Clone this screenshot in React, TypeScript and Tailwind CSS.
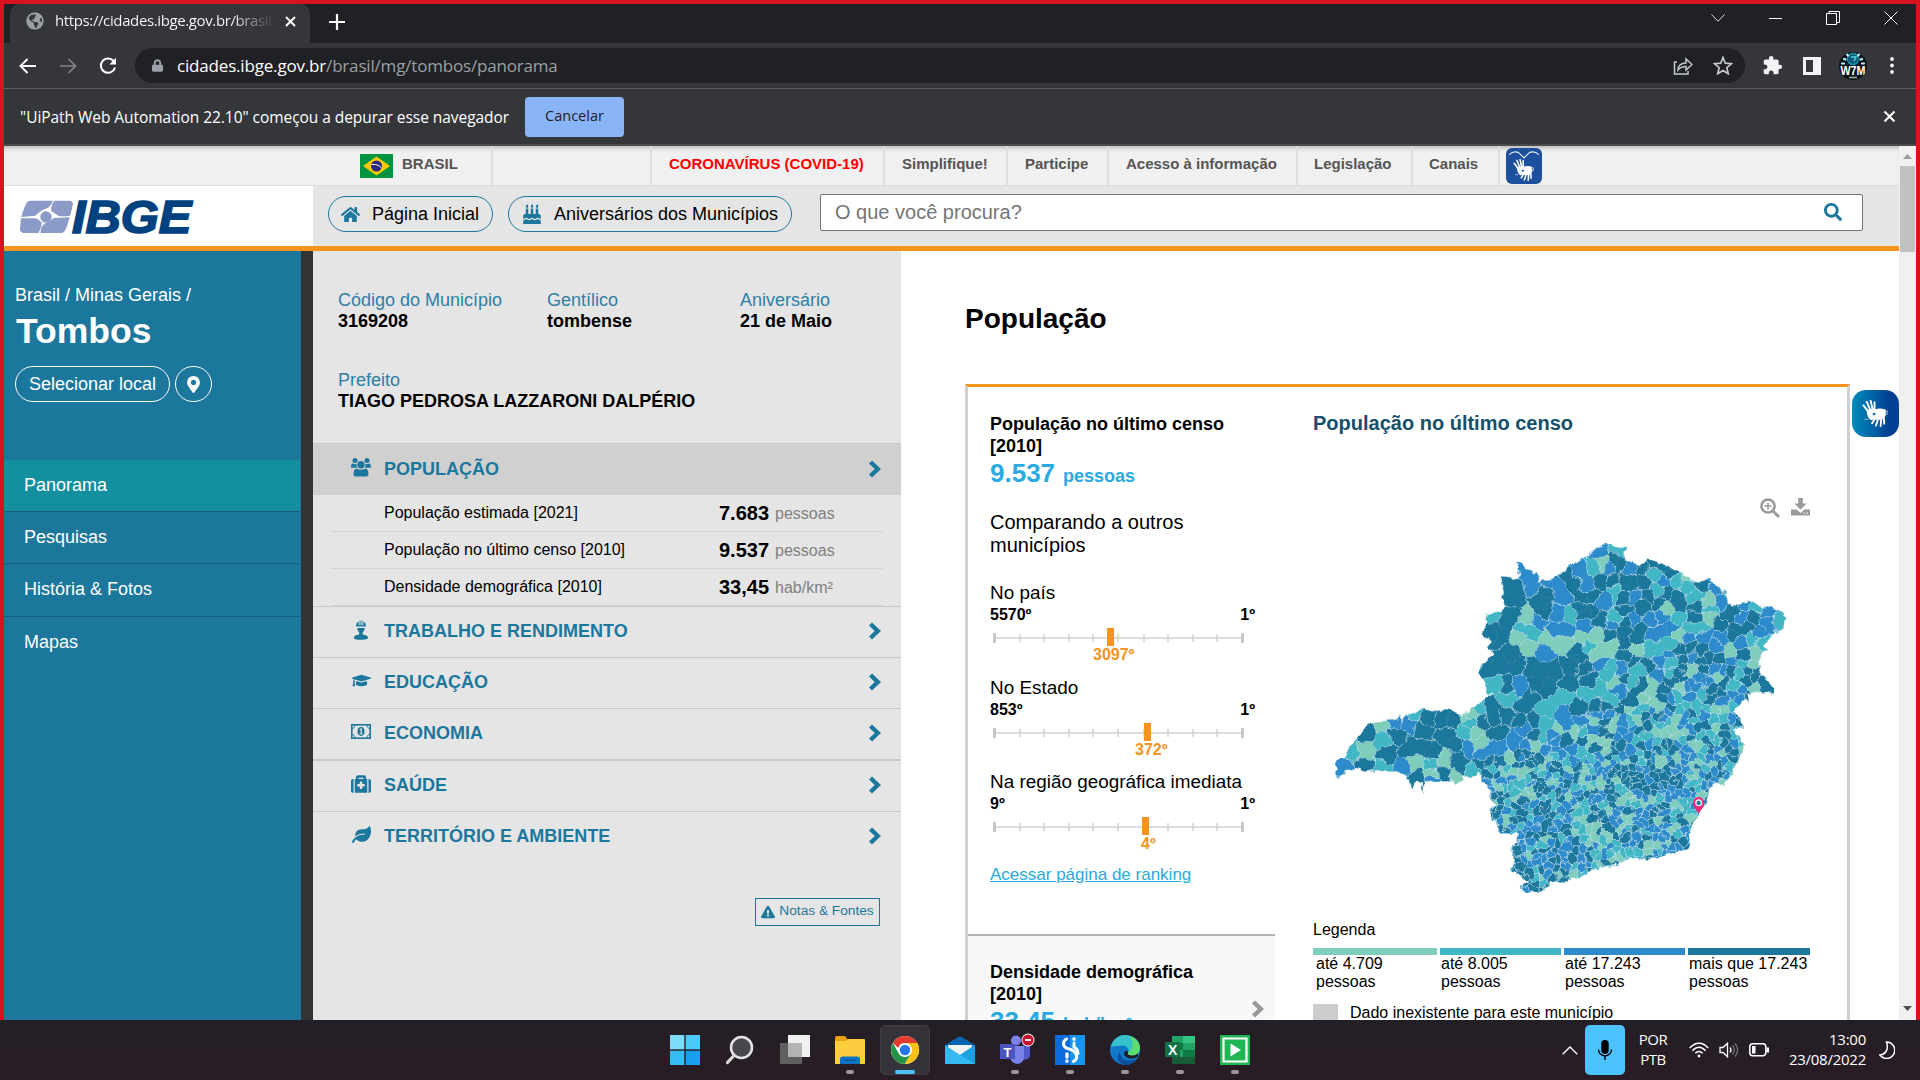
import React from "react";
import { FaHome, FaBirthdayCake, FaSearch, FaMapMarkerAlt, FaGraduationCap, FaExclamationTriangle, FaLeaf, FaMedkit, FaGlobeAmericas, FaLock } from "react-icons/fa";
import { MdExtension } from "react-icons/md";

/* ---------- Choropleth map ---------- */

const OUTLINE =
  "110,832 108,792 122,764 133,768 150,735 168,718 180,690 200,668 230,664 232,656 256,660 270,658 290,655 293,643 303,657 330,642 350,632 365,622 395,630 430,628 450,626 488,640 505,630 525,612 545,603 578,580 562,575 558,535 534,520 540,500 580,462 568,435 572,425 545,400 550,378 566,364 556,355 560,342 605,332 618,320 606,285 612,265 606,225 648,230 662,228 652,190 660,186 675,200 700,215 715,206 720,222 708,248 730,240 755,232 770,215 800,202 850,175 875,148 925,128 983,138 972,178 1018,192 1045,178 1090,184 1130,215 1150,225 1185,240 1228,233 1278,278 1284,308 1320,310 1345,298 1390,316 1420,322 1440,335 1460,352 1445,380 1410,412 1392,432 1412,444 1385,450 1375,505 1400,535 1420,562 1415,578 1385,570 1340,580 1350,598 1320,600 1302,630 1320,645 1330,682 1300,685 1322,705 1332,730 1328,760 1305,790 1300,820 1278,848 1235,850 1222,880 1225,905 1195,940 1178,970 1165,1010 1168,1035 1120,1055 1068,1078 1030,1070 985,1078 900,1102 850,1122 790,1145 752,1140 750,1160 715,1178 675,1175 665,1150 690,1145 665,1130 633,1105 640,1085 638,1040 655,1020 655,1000 600,998 580,960 570,930 585,905 565,880 565,855 535,818 520,830 490,825 485,838 470,842 450,835 395,842 370,845 368,878 360,850 350,845 335,862 320,835 318,818 270,815 230,815 160,800";

const FILL: Record<string, string> = { a: "#7fcdbb", b: "#41b6c4", c: "#2e8bcb", d: "#1c779d" };

/* Each entry: colour class followed by the x y points that belong to one municipality. */
const LARGE = `c 130 795
b 152 752
a 192 752
d 200 695
a 242 664
b 250 715
d 190 795
d 262 760
b 248 800
c 285 665
d 290 700
c 322 668
c 305 800
b 342 636
a 345 785
d 360 735 400 755 330 745
d 370 690
d 385 650
d 425 655 465 655
d 440 705 470 725
b 398 790
a 435 775
d 350 830
c 397 836
d 432 820
a 465 825
a 396 818
d 470 770 480 800
b 522 812
a 492 650
b 508 665
a 515 638
b 538 622
b 492 698
a 528 690
c 510 745
a 535 728
d 545 665
d 645 260 640 300
c 685 225 700 250
c 740 250
c 790 280 770 250
d 725 300 740 270 740 330
b 580 348
a 678 350
d 620 360 600 400 640 340 580 390
a 662 405
b 700 398 670 385
a 685 432
c 715 368
c 770 340
b 810 345
c 795 385 765 385
a 765 425 800 430 745 415
c 735 452
d 600 490 640 460 660 490 570 510
d 720 510 690 500 760 510 740 560 710 550
d 825 450 815 490 805 550 840 470
d 855 500
d 870 535
b 582 548
c 657 553
d 625 555
b 628 598
d 690 590 665 620
b 775 600 740 625 800 585
d 570 620 580 650
d 620 640
d 660 655
d 700 660
c 680 678
c 790 640 795 670
b 740 670 732 710
d 590 695
a 780 685
c 580 745 550 760 600 745
c 645 725
c 680 735
d 800 715
c 845 665
d 850 720
d 835 615
d 890 620
b 860 575 900 560
a 885 658
d 905 695
d 800 225 820 250 850 290 880 290
c 850 215 830 205 858 250
c 900 152
b 945 138 970 148
d 945 175 960 190
b 882 200
a 908 188
c 930 205
d 940 240
d 905 240
c 990 200
d 1000 245 975 240 1030 245
b 1060 215
d 1085 195 1060 185 1115 210
d 840 320 880 330 855 335
c 920 295 895 310
d 965 295
c 1005 285
d 970 328
d 1030 320
b 1070 268
d 1080 305
a 1097 320
c 1085 350
c 1085 390 1050 400 1110 380
d 975 390 970 430 975 365
c 1000 355
d 1025 385 1010 410
d 900 360
c 855 378
c 940 370
b 945 350
a 850 410 890 402
d 930 405
b 865 440
a 910 450 940 432 880 460
c 905 487
b 925 520 930 500
d 975 465
a 1010 445
b 1050 445 1080 450 1110 430
b 1010 510 1000 540 1025 505
a 940 542
d 975 530
c 955 570
b 935 595
d 1015 570 990 600 1030 545
a 1050 570 1050 550
a 1030 590
d 1040 495
c 1075 518
d 1095 565
b 1112 518
d 1150 505
b 1130 245
b 1160 250
d 1205 245
c 1250 262
c 1262 300
b 1187 288
d 1140 305 1130 290
d 1190 320
d 1185 350
b 1140 355
b 1165 385 1200 380
a 1230 300
b 1230 325
a 1228 348
a 1135 405
c 1170 410
c 1215 405
d 1265 370
d 1300 330 1285 350
d 1310 385 1340 380 1300 400
d 1365 350
c 1335 312
b 1365 320
c 1405 330
b 1440 360
c 1405 365
c 1380 395
c 1325 430
b 1355 415
d 1330 465
b 1325 490
a 1365 490
a 1370 460
b 1390 425
a 1292 445
c 1295 480
d 1205 450
d 1210 505
d 1255 475
d 1275 545
d 1340 540
d 1390 545
c 1320 598
c 1225 540
c 1170 590
b 1205 580
d 1195 680 1225 675
d 1315 665
c 1305 730
d 1268 725
d 1300 775
d 1262 820
c 1255 772
a 1275 625
b 1275 655
a 1065 690
c 970 690
a 945 650
d 1020 695
d 570 820 540 790
d 650 765
a 610 812
a 690 810 665 820
b 650 845 670 850 610 860
b 640 875
a 675 880
d 715 880
d 645 915
d 605 900
d 590 940
c 700 905
a 740 775
a 725 795
d 760 805
c 785 765
d 780 890
c 800 915
d 720 840
d 925 975 935 985
d 1025 1030
a 870 985
a 885 1010
c 930 1035
c 975 1040
d 865 1065
b 850 1015
b 880 1060
d 1045 865
d 1010 860
d 1120 1012
d 1150 962
d 685 760`;

type Seed = { x: number; y: number; id: number; c: string };
type Vertex = { x: number; y: number; nb: number };

function random(seed: number) {
  let s = seed;
  return () => {
    s = (s * 1664525 + 1013904223) % 4294967296;
    return s / 4294967296;
  };
}

function buildSeeds(): Seed[] {
  const seeds: Seed[] = [];
  LARGE.split("\n").forEach((line, id) => {
    const [c, ...rest] = line.trim().split(" ");
    for (let i = 0; i < rest.length; i += 2) seeds.push({ x: +rest[i], y: +rest[i + 1], id, c });
  });
  const rnd = random(77);
  let id = 1000;
  for (let i = 0; i < 30000; i++) {
    const x = 540 + rnd() * 830;
    const y = 200 + rnd() * 980;
    let r = 1000;
    if (y > 770 && x > 560) r = 15.5;
    else if (y > 620 && x > 880) r = 18;
    else if (y > 690 && x > 700) r = 22;
    else if (y > 430 && x > 1050) r = 22;
    else if (x > 880) r = 26;
    if (seeds.some((s) => Math.hypot(s.x - x, s.y - y) < r * (s.id < 1000 ? 1.2 : 1))) continue;
    const k = rnd();
    const dark = (x < 820 && y > 850) || y < 600 || (y > 770 && y < 880 && x < 1050);
    const c = dark ? (k < 0.1 ? "a" : k < 0.26 ? "b" : k < 0.6 ? "c" : "d") : k < 0.22 ? "a" : k < 0.44 ? "b" : k < 0.72 ? "c" : "d";
    /* A second point beside the first one makes the municipality longer than it is wide. */
    seeds.push({ x, y, id, c });
    if (rnd() < 0.45) {
      const turn = rnd() * Math.PI * 2;
      seeds.push({ x: x + Math.cos(turn) * r * 0.6, y: y + Math.sin(turn) * r * 0.6, id, c });
    }
    id++;
  }
  return seeds;
}

function buildCells() {
  const seeds = buildSeeds();
  const cells: { d: string; c: string }[] = [];
  let borders = "";
  seeds.forEach((s, i) => {
    let poly: Vertex[] = [
      { x: 60, y: 80, nb: -1 },
      { x: 1500, y: 80, nb: -1 },
      { x: 1500, y: 1230, nb: -1 },
      { x: 60, y: 1230, nb: -1 },
    ];
    const near = seeds
      .map((o, j) => ({ j, dist: Math.hypot(o.x - s.x, o.y - s.y) }))
      .filter((o) => o.j !== i)
      .sort((p, q) => p.dist - q.dist);
    for (const n of near) {
      const reach = Math.max(...poly.map((v) => Math.hypot(v.x - s.x, v.y - s.y)));
      if (n.dist > 2 * reach) break;
      const o = seeds[n.j];
      const mx = (s.x + o.x) / 2;
      const my = (s.y + o.y) / 2;
      const side = (v: Vertex) => (v.x - mx) * (o.x - s.x) + (v.y - my) * (o.y - s.y);
      const out: Vertex[] = [];
      poly.forEach((a, k) => {
        const b = poly[(k + 1) % poly.length];
        const sa = side(a);
        const sb = side(b);
        const t = sa / (sa - sb);
        const cut = { x: a.x + (b.x - a.x) * t, y: a.y + (b.y - a.y) * t };
        if (sa <= 0) {
          out.push(a);
          if (sb > 0) out.push({ ...cut, nb: n.j });
        } else if (sb <= 0) out.push({ ...cut, nb: a.nb });
      });
      poly = out;
    }
    cells.push({ c: s.c, d: "M" + poly.map((v) => v.x.toFixed(1) + " " + v.y.toFixed(1)).join("L") + "Z" });
    poly.forEach((v, k) => {
      const w = poly[(k + 1) % poly.length];
      if (v.nb > i && seeds[v.nb].id !== s.id) borders += `M${v.x.toFixed(1)} ${v.y.toFixed(1)}L${w.x.toFixed(1)} ${w.y.toFixed(1)}`;
    });
  });
  return { cells, borders };
}

const MAP = buildCells();

function StateMap() {
  return (
    <svg width="520" height="420" viewBox="0 0 1560 1260" className="block">
      <defs>
        <clipPath id="state">
          <polygon points={OUTLINE} />
        </clipPath>
        <filter id="rough" x="0" y="0" width="100%" height="100%" filterUnits="userSpaceOnUse" colorInterpolationFilters="sRGB">
          <feTurbulence type="fractalNoise" baseFrequency="0.035" numOctaves="3" seed="4" />
          <feDisplacementMap in="SourceGraphic" scale="26" xChannelSelector="R" yChannelSelector="G" />
        </filter>
      </defs>
      <g filter="url(#rough)">
        <g clipPath="url(#state)">
          {MAP.cells.map((c, i) => (
            <path key={i} d={c.d} fill={FILL[c.c]} stroke={FILL[c.c]} strokeWidth="1.5" />
          ))}
          <path d={MAP.borders} fill="none" stroke="#b9dbe6" strokeWidth="2.1" strokeLinecap="round" />
          <polygon points={OUTLINE} fill="none" stroke="#b5dbe6" strokeWidth="3" />
        </g>
      </g>
      <path d="M1196 938C1188 925 1179 915 1179 905a17 17 0 0 1 34 0c0 10-9 20-17 33z" fill="#ee2a7b" />
      <circle cx="1196" cy="905" r="10.5" fill="#dff1f4" />
      <circle cx="1196" cy="906" r="6.5" fill="#1c779d" />
    </svg>
  );
}

/* ---------- Small drawings ---------- */

const Chevron = ({ className = "text-[#1c779d]" }: { className?: string }) => (
  <svg width="14" height="18" viewBox="0 0 14 18" className={className}>
    <path d="M2.5 2 9.8 9l-7.3 7" fill="none" stroke="currentColor" strokeWidth="4.4" />
  </svg>
);

const Hands = ({ size }: { size: number }) => (
  <svg width={size} height={size} viewBox="0 0 28 28" fill="none" stroke="currentColor" strokeLinecap="round" strokeLinejoin="round">
    <path d="M1.500 5.500 6.500 12M5 2l3.500 8.500M9 .9l2 9M13 2.300V10" strokeWidth="2" />
    <path d="M5.500 11 12 9.500l1.300 2.500-3.300 2 3 4.500-3 2c-2.500-1-4.500-5-4.500-9.500z" fill="currentColor" strokeWidth="1.200" />
    <path d="M11.500 12.500c3-3.500 7-3.800 12.500-2v5.500l-3.500 4-7.500-.5-1.500-1.500 4-4z" fill="currentColor" strokeWidth="1.200" />
    <path d="M14 18.500 10.500 24M17 19l-2.500 7.500M20 19l-.7 8M22.500 17l.5 7.500" strokeWidth="2" />
    <path d="M26 11v4M3 20h3" strokeWidth="1.200" opacity=".6" />
  </svg>
);

const PeopleIcon = () => (
  <svg width="20" height="19" viewBox="0 0 20 19" fill="currentColor">
    <circle cx="4" cy="2.6" r="2.5" />
    <circle cx="16" cy="2.6" r="2.5" />
    <circle cx="10" cy="6.8" r="3.7" />
    <path d="M0 9.2C0 7 .8 5.6 1.8 5.6c2 1 3.200.6 3.900.2-.4 2 0 3 .6 4H1.200C.6 9.800 0 9.700 0 9.200z" />
    <path d="M20 9.200C20 7 19.200 5.600 18.200 5.600c-2 1-3.200.6-3.900.2.4 2 0 3-.6 4h5.100c.6 0 1.200-.1 1.200-.6z" />
    <path d="M5.400 10.500c3 1.800 6.200 1.800 9.200 0 2 .4 2.900 3 2.900 5.500 0 1.800-1 2.500-2.500 2.500H5c-1.500 0-2.500-.7-2.500-2.500 0-2.500.9-5.100 2.900-5.500z" />
  </svg>
);

const WorkerIcon = () => (
  <svg width="16" height="20" viewBox="0 0 16 20" fill="currentColor">
    <path d="M3 6.500C3 4 4 2.300 5.600 1.600v3.600h1V.5h.9v4.700h1V.5h.9v4.700h1V1.600C12 2.300 13 4 13 6.500z" />
    <path d="M4.300 8h7.400c0 2-.8 3.300-2 4.200v2.300c3.600.4 5.400 1.500 5.400 3.500 0 1-3 1.800-7.200 1.800S.8 19 .8 18c0-2 1.800-3.100 5.400-3.500v-2.300c-1.100-.9-1.900-2.200-1.900-4.200z" />
  </svg>
);

const MoneyIcon = () => (
  <svg width="20" height="15" viewBox="0 0 20 15" fill="none" stroke="currentColor">
    <rect x=".8" y=".8" width="18.400" height="13.400" strokeWidth="1.600" />
    <path d="M.8 4.500C3 4.500 4 3 4 .8M19.200 4.500C17 4.500 16 3 16 .8M.8 10.500C3 10.500 4 12 4 14.200M19.200 10.500c-2.200 0-3.200 1.500-3.200 3.700" strokeWidth="1" />
    <ellipse cx="10" cy="7.500" rx="3.500" ry="4.400" fill="currentColor" stroke="none" />
    <path d="M8.800 5.800 10.200 5v5M8.600 10h3" stroke="#e5e5e5" strokeWidth="1.200" />
  </svg>
);

const Flag = () => (
  <svg width="33" height="24" viewBox="0 0 33 24" className="mr-[9px]">
    <rect width="33" height="24" fill="#009440" />
    <path d="M16.500 2.500 30 12 16.500 21.500 3 12z" fill="#ffcb00" />
    <circle cx="16.500" cy="12" r="5.500" fill="#302681" />
    <path d="M11.500 10.500c4-.6 7.500.6 9.900 3.300" stroke="#fff" fill="none" strokeWidth="1" />
  </svg>
);

const IbgeLogo = () => (
  <svg width="178" height="36" viewBox="0 0 534 108" className="overflow-visible">
    <g fill="#8c9ac8">
      <path d="M32 2H99C93 16 88 22 73 28 60 34 52 42 46 47L4 51C8 36 14 20 18 12 21 5 25 2 32 2z" />
      <path d="M105 2h42c9 0 13 6 11 14-2 10-4 20-8 31-16 2-30 2-36 0-7-5-14-10-20-13-2-14 3-26 11-32z" />
      <path d="M3 55h43c8 2 14 8 19 12 1 10-4 22-10 32H13C3 99-1 92 0 84z" />
      <path d="M62 99c0-16 4-24 16-30 8-4 16-8 24-15l47-2c-4 14-8 26-12 36-4 8-8 11-14 11z" />
      <circle cx="78" cy="51" r="17" />
    </g>
    <text x="156" y="99" textLength="358" lengthAdjust="spacingAndGlyphs" fontFamily="Liberation Sans, sans-serif" fontWeight="700" fontStyle="italic" fontSize="136" fill="#00417f" stroke="#00417f" strokeWidth="5">IBGE</text>
  </svg>
);

/* ---------- Browser chrome ---------- */

function TabStrip() {
  return (
    <div className="flex h-[39px] items-end justify-between bg-[#202124]">
      <div className="flex h-full items-center">
        <div className="ml-[6px] flex h-[39px] w-[300px] items-center rounded-t-[9px] bg-[#35363a] pl-4 pb-[5px]">
          <FaGlobeAmericas size={18} className="shrink-0 rounded-full text-[#9aa0a6]" />
          <span className="ml-[11px] w-[220px] overflow-hidden whitespace-nowrap bg-gradient-to-r from-white from-80% to-[#35363a] bg-clip-text pb-px text-[15px] tracking-[-0.38px] text-transparent">https://cidades.ibge.gov.br/brasil/</span>
          <svg width="11" height="11" viewBox="0 0 11 11" className="ml-[10px]"><path d="M1 1l9 9M10 1l-9 9" stroke="#fff" strokeWidth="1.900" /></svg>
        </div>
        <svg width="16" height="16" viewBox="0 0 16 16" className="mb-[4px] ml-[19px]"><path d="M8 0v16M0 8h16" stroke="#fff" strokeWidth="2.200" /></svg>
      </div>
      <div className="mb-[18px] flex items-center pr-[18px]">
        <svg width="14" height="8" viewBox="0 0 14 8"><path d="M.5.5 7 7.300 13.500.5" fill="none" stroke="#ddd" /></svg>
        <svg width="13" height="14" viewBox="0 0 13 14" className="ml-[44px]"><path d="M0 7.500h13" stroke="#fff" /></svg>
        <svg width="14" height="14" viewBox="0 0 14 14" className="ml-[44px]"><path d="M.5 2.500h10v11H.5zM3 2.500v-2h10.500v11h-3" fill="none" stroke="#fff" /></svg>
        <svg width="14" height="14" viewBox="0 0 14 14" className="ml-[44px]"><path d="M.5.5l13 13M13.500.5l-13 13" stroke="#fff" /></svg>
      </div>
    </div>
  );
}

function Toolbar() {
  return (
    <div className="flex h-[46px] items-center border-b border-[#5f6064] bg-[#35363a] pl-[15px]">
      <svg width="17" height="16" viewBox="0 0 17 16"><path d="M17 8H1.500M8.500 1l-7 7 7 7" fill="none" stroke="#fff" strokeWidth="1.900" /></svg>
      <svg width="17" height="16" viewBox="0 0 17 16" className="ml-[24px]"><path d="M0 8h15.500M8.500 1l7 7-7 7" fill="none" stroke="#85868a" strokeWidth="1.700" /></svg>
      <svg width="18" height="18" viewBox="0 0 18 18" className="ml-[22px]"><path d="M14.600 4A7.200 7.200 0 1 0 16 10.500" fill="none" stroke="#fff" strokeWidth="2" /><path d="M17 .8V7.500h-6.700z" fill="#fff" /></svg>
      <div className="ml-[18px] flex h-[35px] w-[1610px] items-center rounded-full bg-[#202124] pl-[17px] pr-[12px]">
        <FaLock size={13} className="w-[11px] text-[#9aa0a6]" />
        <span className="ml-[14px] whitespace-nowrap text-[17px] tracking-[-0.18px] text-white">cidades.ibge.gov.br<span className="text-[#9aa0a6]">/brasil/mg/tombos/panorama</span></span>
        <svg width="20" height="18" viewBox="0 0 20 18" className="ml-auto"><path d="M4 5H1.500v12H15v-3M5 13c.3-4.500 3-7 8-7V2l6 5.500-6 5.500V9.500c-3.500 0-6 1-8 3.500z" fill="none" stroke="#c4c7cb" strokeWidth="1.500" /></svg>
        <svg width="20" height="19" viewBox="0 0 20 19" className="ml-[20px]"><path d="M10 1.500l2.300 5.700 6.200.5-4.700 4 1.500 6.100-5.300-3.300-5.300 3.300 1.500-6.100-4.700-4 6.200-.5z" fill="none" stroke="#c4c7cb" strokeWidth="1.700" /></svg>
      </div>
      <MdExtension size={21} className="ml-[17px] text-[#f1f3f4]" />
      <svg width="18" height="18" viewBox="0 0 18 18" className="ml-[20px]"><path d="M0 0h18v18H0zM3 3v12h7V3z" fill="#f1f3f4" fillRule="evenodd" /></svg>
      <div className="ml-[18px] h-7 w-7 overflow-hidden rounded-full bg-[#0a1418]">
        <svg width="28" height="28" viewBox="0 0 28 28">
          <circle cx="14" cy="7" r="6.500" fill="#1b87a6" />
          <path d="M9 5l4-3 6 2 1 5-6 3-5-3z" fill="#0c5d7a" />
          <path d="M12 5h5l-2 4" stroke="#5cc8e4" strokeWidth="1.500" fill="none" />
          <path d="M8 2.500l1 1M20 2.500l-1 1M5 7l1.500.5M23 7l-1.500.5M3 11.500h2M25 11.500h-2" stroke="#bff0fa" strokeWidth="2.200" fill="none" strokeLinecap="round" />
          <text x="1.500" y="22.500" textLength="25" lengthAdjust="spacingAndGlyphs" fontFamily="Liberation Sans, sans-serif" fontWeight="700" fontSize="12" fill="#fff">W7M</text>
          <path d="M10 25.500h8" stroke="#aaa" strokeWidth="1.500" />
        </svg>
      </div>
      <svg width="4" height="17" viewBox="0 0 4 17" className="ml-[23px]" fill="#f1f3f4"><circle cx="2" cy="2" r="1.900" /><circle cx="2" cy="8.500" r="1.900" /><circle cx="2" cy="15" r="1.900" /></svg>
    </div>
  );
}

function InfoBar() {
  return (
    <div className="flex h-[57px] items-center justify-between border-b-2 border-[#4a4b50] bg-[#35363a] pl-4 pr-[20px]">
      <div className="flex items-center">
        <span className="w-[489px] whitespace-nowrap pt-0.5 text-[15.5px] tracking-[-0.05px] text-white">"UiPath Web Automation 22.10" começou a depurar esse navegador</span>
        <button className="ml-4 h-10 w-[99px] rounded bg-[#8ab4f8] pb-px text-[14.5px] tracking-[0.03px] text-[#202124]">Cancelar</button>
      </div>
      <svg width="13" height="13" viewBox="0 0 13 13"><path d="M1.500 1.500l10 10M11.500 1.500l-10 10" stroke="#fff" strokeWidth="2.100" /></svg>
    </div>
  );
}

/* ---------- Page ---------- */

function GovItem({ width, children, className = "text-[#555]" }: { width: string; children?: React.ReactNode; className?: string }) {
  return <div className={`flex h-full shrink-0 items-center border-r-2 border-[#dedede] pb-[2px] pl-[17px] ${width} ${className}`}>{children}</div>;
}

function GovBar() {
  return (
    <div className="flex h-10 items-center border-b border-[#dcdcdc] bg-[#f0f0f0] text-[15px] font-bold whitespace-nowrap shadow-[inset_0_5px_4px_-3px_#b8b8b8]">
      <div className="flex h-full w-[489px] items-center border-r-2 border-[#dedede] pl-[356px] text-[#555]"><Flag /><span className="pb-[2px]">BRASIL</span></div>
      <GovItem width="w-[159px]" />
      <GovItem width="w-[233px]" className="text-[#f00]">CORONAVÍRUS (COVID-19)</GovItem>
      <GovItem width="w-[123px]">Simplifique!</GovItem>
      <GovItem width="w-[101px]">Participe</GovItem>
      <GovItem width="w-[189px]">Acesso à informação</GovItem>
      <GovItem width="w-[115px]"><span className="-ml-px">Legislação</span></GovItem>
      <GovItem width="w-[87px]"><span className="-ml-px">Canais</span></GovItem>
      <div className="relative ml-[6px] flex h-9 w-9 items-end justify-center rounded-md bg-[#1c4f9c] pb-[3px] text-white">
        <svg width="32" height="9" viewBox="0 0 32 9" className="absolute left-0.5 top-0.5"><path d="M1 5c3-4 9-4 11-1l4 4 4-4c2-3 8-3 11 1" fill="none" stroke="#e4edf8" strokeWidth="1.100" /></svg>
        <Hands size={22} />
      </div>
    </div>
  );
}

function SiteHeader() {
  return (
    <header className="flex h-[65px] border-b-[5px] border-[#f7931e] bg-[#e5e5e5]">
      <div className="w-[309px] bg-white pl-[16px] pt-[14px]"><IbgeLogo /></div>
      <div className="flex flex-1 pl-[15px] pt-2">
        <button className="mt-0.5 flex h-9 w-[165px] items-center rounded-full border border-[#1c779d] pl-[12px] text-[18px] whitespace-nowrap"><FaHome size={19} className="mr-3 text-[#1c779d]" />Página Inicial</button>
        <button className="ml-[15px] mt-0.5 flex h-9 w-[284px] items-center rounded-full border border-[#1c779d] pl-[13px] text-[18px] whitespace-nowrap"><FaBirthdayCake size={20} className="mr-[12px] w-5 shrink-0 text-[#1c779d]" />Aniversários dos Municípios</button>
        <div className="ml-[28px] flex h-[37px] w-[1043px] items-center justify-between rounded-[2px] border border-[#767676] bg-white pb-px pl-[14px] pr-[20px] text-[20px] text-[#757575]">O que você procura?<FaSearch size={18} className="text-[#1c779d]" /></div>
      </div>
    </header>
  );
}

function Sidebar() {
  return (
    <nav className="flex h-full w-[309px] shrink-0 flex-col border-r-[12px] border-[#333] bg-[#1c779d] text-[18px] text-white">
      <div className="h-[209px] pl-[11px] pt-[33px]">
        <div className="leading-[22px]">Brasil / Minas Gerais /</div>
        <div className="mt-[4px] pl-px text-[35.500px] font-bold leading-[42px]">Tombos</div>
        <div className="mt-[14px] flex gap-[5px]">
          <button className="h-[36px] w-[155px] rounded-full border border-white whitespace-nowrap">Selecionar local</button>
          <button className="flex h-[36px] w-[37px] items-center justify-center rounded-full border border-white"><FaMapMarkerAlt size={17} /></button>
        </div>
      </div>
      <div className="mr-px h-[52px] border-b border-[#155f7e] bg-[#148f9f] pl-5 leading-[50px]">Panorama</div>
      <div className="mr-px h-[52px] border-b border-[#155f7e] pl-5 leading-[50px]">Pesquisas</div>
      <div className="mr-px h-[53px] border-b border-[#155f7e] pl-5 leading-[50px]">História &amp; Fotos</div>
      <div className="pl-5 leading-[50px]">Mapas</div>
    </nav>
  );
}

function Fact({ label, value, className = "" }: { label: string; value: string; className?: string }) {
  return (
    <div className={`whitespace-nowrap text-[18px] leading-[21px] ${className}`}>
      <div className="text-[#2f7fa5]">{label}</div>
      <div className="font-bold">{value}</div>
    </div>
  );
}

function Section({ icon, title, className }: { icon: React.ReactNode; title: string; className: string }) {
  return (
    <div className={`flex items-center pl-[38px] pr-[19px] pb-px text-[18px] font-bold text-[#1c779d] ${className}`}>
      <span className="mb-1 flex w-[20px] justify-center">{icon}</span>
      <span className="ml-[13px] flex-1 whitespace-nowrap">{title}</span>
      <Chevron className="mb-px text-[#1c779d]" />
    </div>
  );
}

function Row({ label, value, unit }: { label: string; value: string; unit: string }) {
  return (
    <div className="ml-[18px] mr-[18px] flex h-[37px] items-center border-b border-[#d4d4d4] pb-px pl-[53px] text-[16px]">
      <span className="w-[335px]">{label}</span>
      <span className="text-[20px] font-bold">{value}</span>
      <span className="ml-[6px] mt-[3px] text-[#808080]">{unit}</span>
    </div>
  );
}

function InfoPanel() {
  return (
    <section className="flex h-full w-[588px] shrink-0 flex-col bg-[#e5e5e5]">
      <div className="h-[192px] pl-[25px] pt-[39px]">
        <div className="flex">
          <Fact label="Código do Município" value="3169208" className="w-[209px]" />
          <Fact label="Gentílico" value="tombense" className="w-[193px]" />
          <Fact label="Aniversário" value="21 de Maio" />
        </div>
        <Fact label="Prefeito" value="TIAGO PEDROSA LAZZARONI DALPÉRIO" className="mt-[38px]" />
      </div>
      <Section icon={<PeopleIcon />} title="POPULAÇÃO" className="h-[52px] border-t border-[#c8c8c8] bg-[#d0d0d0]" />
      <Row label="População estimada [2021]" value="7.683" unit="pessoas" />
      <Row label="População no último censo [2010]" value="9.537" unit="pessoas" />
      <Row label="Densidade demográfica [2010]" value="33,45" unit="hab/km²" />
      <Section icon={<WorkerIcon />} title="TRABALHO E RENDIMENTO" className="h-[51px] border-t border-[#c8c8c8]" />
      <Section icon={<FaGraduationCap size={19} />} title="EDUCAÇÃO" className="h-[51px] border-t border-[#c8c8c8]" />
      <Section icon={<MoneyIcon />} title="ECONOMIA" className="h-[51px] border-t border-[#c8c8c8]" />
      <Section icon={<FaMedkit size={20} />} title="SAÚDE" className="h-[52px] border-t-2 border-[#c8c8c8]" />
      <Section icon={<FaLeaf size={19} />} title="TERRITÓRIO E AMBIENTE" className="h-[51px] border-t border-[#c8c8c8]" />
      <button className="ml-[442px] mt-[36px] flex h-[28px] w-[125px] items-center justify-center gap-[4px] border border-[#1c779d] pb-0.5 text-[13.700px] whitespace-nowrap text-[#1c779d]"><FaExclamationTriangle size={14} className="mt-px" />Notas &amp; Fontes</button>
    </section>
  );
}

const TICKS = [27, 51, 76, 100, 125, 151, 175, 200, 224];

function Ranking({ title, last, rank, marker, label }: { title: string; last: string; rank: string; marker: number; label: number }) {
  return (
    <div className="h-[94.500px]">
      <div className="whitespace-nowrap text-[18.900px] leading-[23px]">{title}</div>
      <div className="flex w-[265px] justify-between text-[16px] font-bold leading-[22px]"><span>{last}</span><span>1º</span></div>
      <svg width="260" height="18" viewBox="0 0 260 18" className="mt-[2px] block">
        <path d="M3 10h251" stroke="#dcdcdc" strokeWidth="2" />
        {TICKS.map((t) => <path key={t} d={`M${t + 3} 6v8`} stroke="#ccc" strokeWidth="1.300" />)}
        <path d="M4.500 5v10M252.500 5v10" stroke="#c8c8c8" strokeWidth="3" />
        <rect x={marker} y="0" width="7" height="18" fill="#f7931e" />
      </svg>
      <div className="text-[16px] font-bold leading-[18px] text-[#f7931e]" style={{ paddingLeft: label }}>{rank}</div>
    </div>
  );
}

function Legend() {
  const items = [
    ["bg-[#7fcdbb] w-[124px]", "até 4.709"],
    ["bg-[#41b6c4] w-[121px]", "até 8.005"],
    ["bg-[#2e8bcb] w-[121px]", "até 17.243"],
    ["bg-[#1c779d] w-[122px]", "mais que 17.243"],
  ];
  return (
    <div className="text-[16px]">
      <div className="leading-[20px]">Legenda</div>
      <div className="mt-[8px] flex gap-[3px]">
        {items.map(([c, t], i) => (
          <div key={t}>
            <div className={`h-[7px] ${c}`} />
            <div className={`whitespace-nowrap leading-[18px] ${i === 0 ? "pl-[3px]" : "pl-px"}`}>{t}<br />pessoas</div>
          </div>
        ))}
      </div>
      <div className="mt-[13px] flex gap-[12px]"><div className="h-[25px] w-[25px] bg-[#ccc]" /><span className="leading-[18px]">Dado inexistente para este município</span></div>
    </div>
  );
}

function Main() {
  return (
    <main className="relative h-full flex-1 overflow-hidden bg-white pl-[64px] pt-[51px]">
      <h1 className="text-[28px] font-bold leading-[34px]">População</h1>
      <div className="mt-[48px] flex h-[760px] w-[885px] border-x-[3px] border-t-[3px] border-x-[#cfcfcf] border-t-[#f7931e]">
        <div className="w-[307px]">
          <div className="h-[547px] pl-[22px] pt-[26px]">
            <div className="text-[18px] font-bold leading-[22px] whitespace-nowrap">População no último censo<br />[2010]</div>
            <div className="flex items-baseline gap-2 font-bold leading-[32px] text-[#29abe2]"><span className="text-[26px]">9.537</span><span className="text-[18px]">pessoas</span></div>
            <div className="mt-[19px] text-[20px] leading-[23px]">Comparando a outros<br />municípios</div>
            <div className="mt-[24px]">
              <Ranking title="No país" last="5570º" rank="3097º" marker={117} label={103} />
              <Ranking title="No Estado" last="853º" rank="372º" marker={154} label={145} />
              <Ranking title="Na região geográfica imediata" last="9º" rank="4º" marker={152} label={151} />
            </div>
            <a className="block text-[17px] leading-[20px] text-[#29abe2] underline whitespace-nowrap">Acessar página de ranking</a>
          </div>
          <div className="flex h-[120px] justify-between border-t-2 border-[#b3b3b3] bg-[#f8f8f8] pl-[22px] pr-[10px] pt-[25px]">
            <div>
              <div className="text-[18px] font-bold leading-[22px] whitespace-nowrap">Densidade demográfica<br />[2010]</div>
              <div className="flex items-baseline gap-2 font-bold leading-[32px] text-[#29abe2]"><span className="text-[26px]">33,45</span><span className="text-[18px]">hab/km²</span></div>
            </div>
            <div className="mt-[39px]"><Chevron className="text-[#999]" /></div>
          </div>
        </div>
        <div className="flex-1 pl-[38px] pt-[24px]">
          <h2 className="text-[20px] font-bold leading-[24px] text-[#144f6b]">População no último censo</h2>
          <div className="mt-[63px] flex gap-[11px] pl-[447px] text-[#999]">
            <svg width="20" height="20" viewBox="0 0 20 20" fill="none" stroke="currentColor"><circle cx="8" cy="8" r="6.600" strokeWidth="2.500" /><path d="M13 13l6 6" strokeWidth="3" /><path d="M8 4.500v7M4.500 8h7" strokeWidth="1.500" /></svg>
            <svg width="19" height="18" viewBox="0 0 19 18" fill="currentColor"><path d="M7.200 0h4.600v5.500h3.700L9.500 11.700 3.500 5.500h3.700zM0 11.500h5.500L9.500 15l4-3.500H19V17.500H0zM12.500 14.500v1.300h1.300v-1.300zM15.500 14.500v1.300h1.300v-1.300z" fillRule="evenodd" /></svg>
          </div>
          <div className="-ml-[13px] -mt-[17px]"><StateMap /></div>
          <div className="-mt-px"><Legend /></div>
        </div>
      </div>
      <div className="absolute right-0 top-[139px] flex h-[47px] w-[47px] items-center justify-center rounded-[14px] bg-gradient-to-r from-[#038bb9] to-[#003f93] to-80% text-white"><Hands size={27} /></div>
    </main>
  );
}

/* ---------- Taskbar ---------- */

const ICONS: { icon: React.ReactNode; dot?: boolean; active?: boolean }[] = [
  { icon: <g><path d="M0 0h14.300v14.300H0z" fill="#7fdcff" /><path d="M15.700 0H30v14.300H15.700z" fill="#4cc9fb" /><path d="M0 15.700h14.300V30H0z" fill="#39bbf8" /><path d="M15.700 15.700H30V30H15.700z" fill="#189fee" /></g> },
  { icon: <g><path d="M9 20.500 2.500 27.500" stroke="#dcdcdc" strokeWidth="3.200" strokeLinecap="round" /><circle cx="16.500" cy="12.500" r="10.500" fill="#4a474c" stroke="#e6e6e6" strokeWidth="2.500" /></g> },
  { icon: <g><path d="M8 0h22v22H8z" fill="#f0f0f0" /><path d="M0 8h22v21H0z" fill="#6c6c6c" opacity=".85" /><path d="M8 8h14v14H8z" fill="#b4b4b4" /></g> },
  { icon: <g><path d="M0 3c0-1 .6-2 2-2h8l3 4v5H0z" fill="#e8a20c" /><path d="M0 6h11l2-2h16c.6 0 1 .5 1 1v23c0 .6-.4 1-1 1H0z" fill="#fbcd3f" /><path d="M5 29v-5c0-1.600 1-2.500 2.500-2.500h15c1.500 0 2.500 1 2.500 2.500v5z" fill="#0f72c4" /><path d="M9 25h12" stroke="#074e8c" /></g>, dot: true },
  { icon: <g><circle cx="15" cy="15" r="14" fill="#fff" /><path d="M15 1a14 14 0 0 1 12.200 7H15a7 7 0 0 0-6.700 5L2.900 8A14 14 0 0 1 15 1z" fill="#e33b2e" /><path d="M27.200 8A14 14 0 0 1 14.500 29l6.300-10.200A7 7 0 0 0 15 8z" fill="#fbc116" /><path d="M2.900 8A14 14 0 0 0 14.500 29l6.200-10c-3 4-9 4-11.700 0z" fill="#229342" /><circle cx="15" cy="15" r="6.500" fill="#fff" /><circle cx="15" cy="15" r="5.200" fill="#2a75e8" /></g>, active: true },
  { icon: <g><path d="M0 10 15 1l15 9v19H0z" fill="#0763ae" /><path d="M3 10h24v10H3z" fill="#f2f2f2" /><path d="M0 10l15 10L30 10v19H0z" fill="#35b9f1" /><path d="M15 20 30 10v19z" fill="#1c9fe4" /></g> },
  { icon: <g><circle cx="16" cy="5.500" r="5" fill="#7b83eb" /><circle cx="26" cy="8" r="3.500" fill="#5059c9" /><path d="M20 11h10v9c0 5-6 6-9 3z" fill="#5059c9" /><path d="M10 11h14v11c0 9-13 9-14 0z" fill="#7b83eb" /><path d="M0 9h15v15H0z" fill="#4b53bc" /><text x="3.500" y="21.500" fontFamily="Liberation Sans, sans-serif" fontWeight="700" fontSize="13" fill="#fff">T</text><circle cx="28" cy="5" r="6.500" fill="#fff" /><circle cx="28" cy="5" r="5.600" fill="#c4162e" /><path d="M25 5h6" stroke="#fff" strokeWidth="1.800" /></g>, dot: true },
  { icon: <g><path d="M0 0h30v30H0z" fill="#0a6bdc" /><path d="M15 0h15v30H15z" fill="#1596ec" /><path d="M11.500 4C6.500 7 8 12.500 14 14c8 2 10 9 4.500 12.500M19 8v4c2.500 1.500 4 4 4 6.500" fill="none" stroke="#fff" strokeWidth="3" strokeLinecap="round" /><path d="M19 4v.2M12 19v3M12 26v.2" fill="none" stroke="#fff" strokeWidth="3.400" strokeLinecap="round" /></g>, dot: true },
  { icon: <g><circle cx="15" cy="15" r="15" fill="#1178c9" /><path d="M1 12C3 3 10 0 15 0c8 0 15 5 15 13 0 5-4 7.500-8 7.500-3 0-5-1-4-3 2-3-1-7-5-7-5 0-9 1-12 1.500z" fill="#35c1c9" /><path d="M19 1c7 2 11 7 11 12 0 5-4 7.500-8 7.500-3 0-5-1-4-3 6-3 6-11 1-16.500z" fill="#5ddb6d" /><path d="M10 17c0 7 6 11 17 7-3 4-7 6-12 6-8-2-9-9-5-13z" fill="#0c4f9c" /><path d="M18 17.500c-1 2 1 3 4 3 2 0 4-.4 6-2v3c-4 3-13 3-14-3 0-3 4-4 4-1z" fill="#231e25" /></g>, dot: true },
  { icon: <g><path d="M7 1h23v28H7z" fill="#21a366" /><path d="M18 1h12v7H18z" fill="#33c481" /><path d="M7 8h11v7H7z" fill="#107c41" /><path d="M7 22h23v7H7z" fill="#185c37" /><path d="M18 15h12v7H18z" fill="#107c41" /><path d="M0 7h15v15H0z" fill="#0f7240" /><text x="3" y="19.500" fontFamily="Liberation Sans, sans-serif" fontWeight="700" fontSize="14" fill="#fff">X</text></g>, dot: true },
  { icon: <g><path d="M0 0h30v30H0z" fill="#1fb653" /><path d="M3.500 3.500h23v23h-23z" fill="#1fb653" stroke="#fff" strokeWidth="2.200" /><path d="M10.500 8.500 21 15l-10.500 6.500z" fill="#fff" /></g>, dot: true },
];

function Taskbar() {
  return (
    <footer className="flex h-[60px] bg-gradient-to-b from-[#231f26] to-[#291c24] pl-[657px] font-['Open_Sans',sans-serif] text-white">
      {ICONS.map((it, i) => (
        <div key={i} className="flex w-[55px] shrink-0 justify-center pt-[5px]">
          <div className={`flex h-[50px] w-[50px] flex-col items-center rounded-[5px] ${it.active ? "border border-[#423d44] bg-[#363239] pt-[9px]" : "pt-[10px]"}`}>
            <svg width="30" height="30" viewBox="0 0 30 30" className="shrink-0 overflow-visible">{it.icon}</svg>
            {it.active && <div className="mt-[5px] h-1 w-5 shrink-0 rounded-full bg-[#4cc2ff]" />}
            {it.dot && <div className="mt-[5px] h-1 w-2 shrink-0 rounded-full bg-[#9b969c]" />}
          </div>
        </div>
      ))}
      <div className="ml-auto flex items-center pr-[25px] text-[15px]">
        <svg width="16" height="9" viewBox="0 0 16 9"><path d="M.7 8.300 8 1l7.300 7.300" fill="none" stroke="#fff" strokeWidth="1.300" /></svg>
        <div className="ml-[7px] flex h-[50px] w-10 items-center justify-center rounded-[5px] bg-[#4cc2ff]">
          <svg width="16" height="20" viewBox="0 0 16 20"><rect x="4.300" y="0" width="7.400" height="14" rx="3.700" fill="#000" /><path d="M1.500 9.500a6.500 6.500 0 0 0 13 0M8 16v4" fill="none" stroke="#000" strokeWidth="1.400" /></svg>
        </div>
        <div className="ml-[13px] w-[30px] pb-0.5 text-center text-[15px] leading-[20px] tracking-[-0.5px]">POR<br />PTB</div>
        <svg width="20" height="16" viewBox="0 0 20 16" className="ml-[21px]" fill="none" stroke="#fff" strokeWidth="1.500"><path d="M.8 6C6-.5 14-.5 19.200 6M3.500 8.700c4-4.500 9-4.500 13 0M6.300 11.300c2.300-2.500 5.100-2.500 7.400 0" /><circle cx="10" cy="14" r="1.400" fill="#fff" stroke="none" /></svg>
        <svg width="20" height="16" viewBox="0 0 20 16" className="ml-[10px]" fill="none" stroke="#fff" strokeWidth="1.300"><path d="M1 5.500h3L8.500 1.200v13.600L4 10.500H1z" /><path d="M11 5.500c1.200 1.500 1.200 3.500 0 5" /><path d="M13.500 3.500c2.200 2.700 2.200 6.300 0 9M16 1.500c3.300 4 3.300 9 0 13" stroke="#77727a" /></svg>
        <svg width="20" height="14" viewBox="0 0 20 14" className="ml-[10px]"><rect x=".8" y=".8" width="16" height="12" rx="3" fill="none" stroke="#fff" strokeWidth="1.500" /><path d="M3 3h3.500v7.600H3zM17.500 4.500H20v5h-2.500z" fill="#fff" /></svg>
        <div className="w-[97px] pb-0.5 text-right text-[15px] leading-[20px] tracking-[-0.250px]">13:00<br />23/08/2022</div>
        <svg width="16" height="18" viewBox="0 0 16 18" className="ml-[13px]"><path d="M7.500 1a8.200 8.200 0 1 1-6.600 13C8 13 9.500 7 7.500 1z" fill="none" stroke="#fff" strokeWidth="1.500" /></svg>
      </div>
    </footer>
  );
}

export default function App() {
  return (
    <div className="h-[1080px] w-[1920px] overflow-hidden bg-[#231f26]">
      <div className="flex h-[1020px] flex-col border-4 border-b-0 border-[#d8121f]">
        <div className="shrink-0 font-['Open_Sans',sans-serif]">
          <TabStrip />
          <Toolbar />
          <InfoBar />
        </div>
        <div className="flex h-[874px] font-['Liberation_Sans',Arial,sans-serif] text-black">
          <div className="flex w-[1895px] flex-col">
            <GovBar />
            <SiteHeader />
            <div className="flex h-[769px] overflow-hidden">
              <Sidebar />
              <InfoPanel />
              <Main />
            </div>
          </div>
          <div className="flex w-[17px] flex-col items-center bg-[#f0f0f0] pt-[8px]">
            <svg width="9" height="5" viewBox="0 0 9 5"><path d="M0 5 4.500 0 9 5z" fill="#999" /></svg>
            <div className="mt-[7px] h-[86px] w-[15px] bg-[#c1c1c1]" />
            <svg width="9" height="5" viewBox="0 0 9 5" className="mb-[9px] mt-auto"><path d="M0 0l4.500 5L9 0z" fill="#505050" /></svg>
          </div>
        </div>
      </div>
      <Taskbar />
    </div>
  );
}
